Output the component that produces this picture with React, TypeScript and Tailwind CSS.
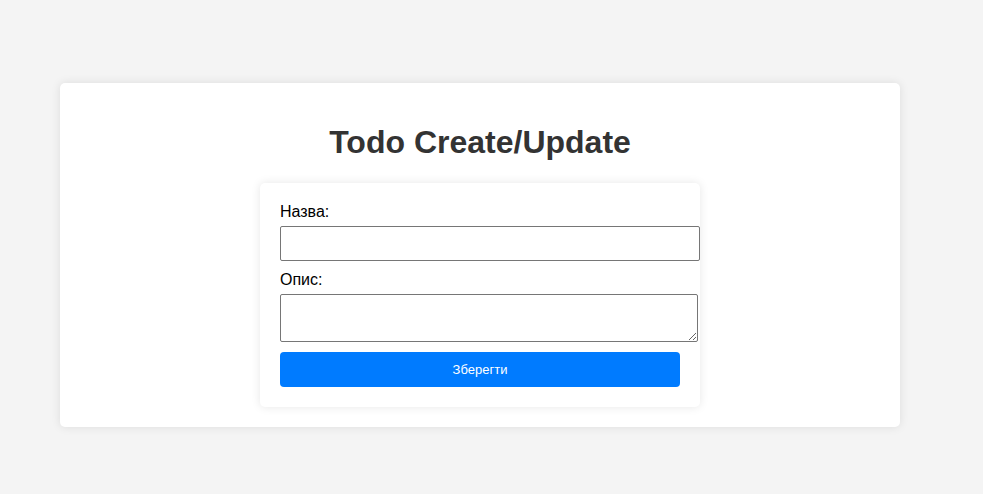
import React, { useState } from 'react';

const App: React.FC = () => {
    const [title, setTitle] = useState('');
    const [description, setDescription] = useState('');

    const handleSubmit = (e: React.FormEvent) => {
        e.preventDefault();
    };

    return (
        <div className="min-h-screen bg-[#f4f4f4] pt-[83px] pl-[60px] font-['Liberation_Sans',Arial,sans-serif]">
            <div className="w-[840px] bg-white rounded-[5px] shadow-[0_0_10px_rgba(0,0,0,0.1)] p-5">
                <h1 className="text-[32px] leading-[36.8px] font-bold text-[#333] text-center my-[21.44px]">Todo Create/Update</h1>
                <form
                    onSubmit={handleSubmit}
                    className="w-[440px] mx-auto bg-white rounded-[5px] shadow-[0_0_10px_rgba(0,0,0,0.1)] p-5"
                >
                    <label htmlFor="title" className="block text-base leading-[18.4px] text-black">Назва:</label>
                    <input
                        id="title"
                        type="text"
                        value={title}
                        onChange={e => setTitle(e.target.value)}
                        className="block w-[420px] h-[35px] mt-[5px] mb-[10px] border border-[#767676] rounded-[2px] px-2 text-base"
                    />
                    <label htmlFor="description" className="block text-base leading-[18.4px] text-black">Опис:</label>
                    <textarea
                        id="description"
                        value={description}
                        onChange={e => setDescription(e.target.value)}
                        className="block w-[418px] h-[48px] mt-[5px] mb-[10px] border border-[#767676] rounded-[2px] px-2 text-base"
                    />
                    <button
                        type="submit"
                        className="block w-[400px] h-[35px] bg-[#007bff] text-white text-[13px] rounded-[4px] cursor-pointer"
                    >
                        Зберегти
                    </button>
                </form>
            </div>
        </div>
    );
};

export default App;
